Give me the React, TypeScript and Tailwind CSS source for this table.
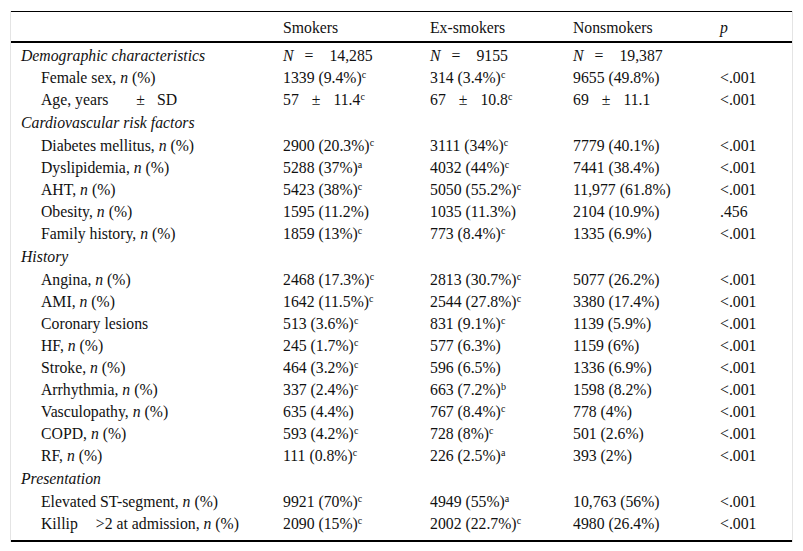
import type { ReactNode } from "react";

type Cell = { v: ReactNode; sup?: string };
type Row =
  | { kind: "section"; label: string; cells?: ReactNode[] }
  | { kind: "row"; label: ReactNode; cells: Cell[]; p: string };

function NPct({ name }: { name: string }) {
  return (
    <>
      {name}, <i>n</i> (%)
    </>
  );
}

function Eq({ n }: { n: string }) {
  return (
    <>
      <i>N</i>
      <span className="ml-[11px]">=</span>
      <span className="ml-[16px]">{n}</span>
    </>
  );
}

function Pm({ a, b }: { a: string; b: string }) {
  return (
    <>
      {a}
      <span className="ml-[13px]">±</span>
      <span className="ml-[13px]">{b}</span>
    </>
  );
}

const c = (v: ReactNode, sup?: string): Cell => ({ v, sup });

const ROWS: Row[] = [
  {
    kind: "section",
    label: "Demographic characteristics",
    cells: [<Eq n="14,285" />, <Eq n="9155" />, <Eq n="19,387" />],
  },
  { kind: "row", label: <NPct name="Female sex" />, cells: [c("1339 (9.4%)", "c"), c("314 (3.4%)", "c"), c("9655 (49.8%)")], p: "<.001" },
  {
    kind: "row",
    label: (
      <>
        Age, years<span className="ml-[28px]">±</span>
        <span className="ml-[12px]">SD</span>
      </>
    ),
    cells: [c(<Pm a="57" b="11.4" />, "c"), c(<Pm a="67" b="10.8" />, "c"), c(<Pm a="69" b="11.1" />)],
    p: "<.001",
  },
  { kind: "section", label: "Cardiovascular risk factors" },
  { kind: "row", label: <NPct name="Diabetes mellitus" />, cells: [c("2900 (20.3%)", "c"), c("3111 (34%)", "c"), c("7779 (40.1%)")], p: "<.001" },
  { kind: "row", label: <NPct name="Dyslipidemia" />, cells: [c("5288 (37%)", "a"), c("4032 (44%)", "c"), c("7441 (38.4%)")], p: "<.001" },
  { kind: "row", label: <NPct name="AHT" />, cells: [c("5423 (38%)", "c"), c("5050 (55.2%)", "c"), c("11,977 (61.8%)")], p: "<.001" },
  { kind: "row", label: <NPct name="Obesity" />, cells: [c("1595 (11.2%)"), c("1035 (11.3%)"), c("2104 (10.9%)")], p: ".456" },
  { kind: "row", label: <NPct name="Family history" />, cells: [c("1859 (13%)", "c"), c("773 (8.4%)", "c"), c("1335 (6.9%)")], p: "<.001" },
  { kind: "section", label: "History" },
  { kind: "row", label: <NPct name="Angina" />, cells: [c("2468 (17.3%)", "c"), c("2813 (30.7%)", "c"), c("5077 (26.2%)")], p: "<.001" },
  { kind: "row", label: <NPct name="AMI" />, cells: [c("1642 (11.5%)", "c"), c("2544 (27.8%)", "c"), c("3380 (17.4%)")], p: "<.001" },
  { kind: "row", label: "Coronary lesions", cells: [c("513 (3.6%)", "c"), c("831 (9.1%)", "c"), c("1139 (5.9%)")], p: "<.001" },
  { kind: "row", label: <NPct name="HF" />, cells: [c("245 (1.7%)", "c"), c("577 (6.3%)"), c("1159 (6%)")], p: "<.001" },
  { kind: "row", label: <NPct name="Stroke" />, cells: [c("464 (3.2%)", "c"), c("596 (6.5%)"), c("1336 (6.9%)")], p: "<.001" },
  { kind: "row", label: <NPct name="Arrhythmia" />, cells: [c("337 (2.4%)", "c"), c("663 (7.2%)", "b"), c("1598 (8.2%)")], p: "<.001" },
  { kind: "row", label: <NPct name="Vasculopathy" />, cells: [c("635 (4.4%)"), c("767 (8.4%)", "c"), c("778 (4%)")], p: "<.001" },
  { kind: "row", label: <NPct name="COPD" />, cells: [c("593 (4.2%)", "c"), c("728 (8%)", "c"), c("501 (2.6%)")], p: "<.001" },
  { kind: "row", label: <NPct name="RF" />, cells: [c("111 (0.8%)", "c"), c("226 (2.5%)", "a"), c("393 (2%)")], p: "<.001" },
  { kind: "section", label: "Presentation" },
  { kind: "row", label: <NPct name="Elevated ST-segment" />, cells: [c("9921 (70%)", "c"), c("4949 (55%)", "a"), c("10,763 (56%)")], p: "<.001" },
  {
    kind: "row",
    label: (
      <>
        Killip<span className="ml-[18px]">&gt;2 at admission, </span>
        <i>n</i> (%)
      </>
    ),
    cells: [c("2090 (15%)", "c"), c("2002 (22.7%)", "c"), c("4980 (26.4%)")],
    p: "<.001",
  },
];

const td = "whitespace-nowrap pl-[10px] pt-[4px] align-middle";

export default function App() {
  return (
    <div className="min-h-[551px] w-[803px] bg-white pt-[11px] font-['Liberation_Serif',serif] text-[15.75px] leading-[18px] text-[#111]">
      <div className="mx-[10px] border-x border-[#e4e4e4]">
        <table className="w-full table-fixed border-collapse">
          <colgroup>
            <col className="w-[262px]" />
            <col className="w-[147px]" />
            <col className="w-[143px]" />
            <col className="w-[147px]" />
            <col />
          </colgroup>
          <thead>
            <tr className="border-t border-b-2 border-black">
              <th className="h-[30px] pl-[10px] pt-[4px] text-left font-normal" />
              <th className="pl-[10px] pt-[4px] text-left font-normal">Smokers</th>
              <th className="pl-[10px] pt-[4px] text-left font-normal">Ex-smokers</th>
              <th className="pl-[10px] pt-[4px] text-left font-normal">Nonsmokers</th>
              <th className="pl-[10px] pt-[4px] text-left font-normal italic">p</th>
            </tr>
          </thead>
          <tbody className="border-b-2 border-black">
            {ROWS.map((r, i) => {
              const last = i === ROWS.length - 1;
              if (r.kind === "section") {
                const h = i === 0 ? " h-[22px]" : " h-[24px]";
                return (
                  <tr key={i}>
                    <td className={td + h + " italic"}>{r.label}</td>
                    {[0, 1, 2].map((j) => (
                      <td key={j} className={td + h}>
                        {r.cells?.[j]}
                      </td>
                    ))}
                    <td className={td + h} />
                  </tr>
                );
              }
              const h = last ? " h-[30px] pb-[6px]" : " h-[22px]";
              return (
                <tr key={i}>
                  <td className={td + h + " pl-[30px]"}>{r.label}</td>
                  {r.cells.map((cell, j) => (
                    <td key={j} className={td + h}>
                      {cell.v}
                      {cell.sup && <sup className="text-[10px]">{cell.sup}</sup>}
                    </td>
                  ))}
                  <td className={td + h}>{r.p}</td>
                </tr>
              );
            })}
          </tbody>
        </table>
      </div>
    </div>
  );
}
